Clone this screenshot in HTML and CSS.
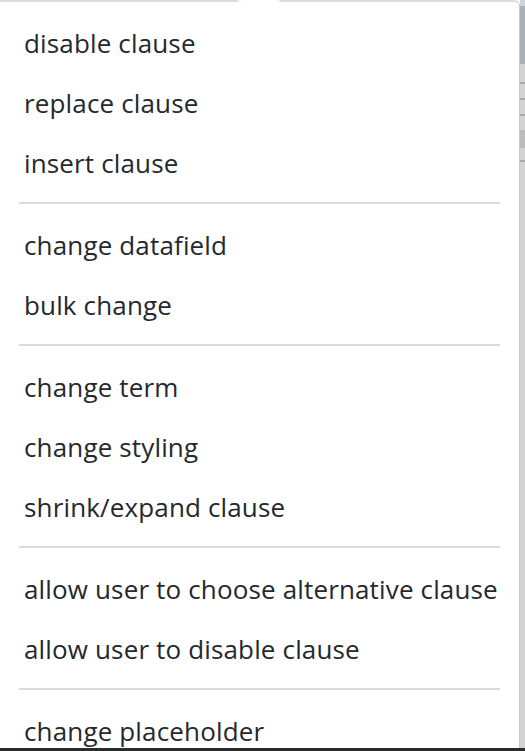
FILE: index.html
```html
<!DOCTYPE html>
<html lang="en">
<head>
<meta charset="utf-8">
<title>Clause menu</title>
<link rel="stylesheet" href="styles.css">
</head>
<body>
<div class="screen">
  <div class="stage">
    <div class="menu">
      <span class="notch"></span>
      <div class="item">disable clause</div>
      <div class="item">replace clause</div>
      <div class="item">insert clause</div>
      <div class="divider"></div>
      <div class="item">change datafield</div>
      <div class="item">bulk change</div>
      <div class="divider"></div>
      <div class="item">change term</div>
      <div class="item">change styling</div>
      <div class="item">shrink/expand clause</div>
      <div class="divider"></div>
      <div class="item">allow user to choose alternative clause</div>
      <div class="item">allow user to disable clause</div>
      <div class="divider"></div>
      <div class="item">change placeholder</div>
    </div>
    <div class="backdrop">
      <span class="seg seg-head"></span>
      <span class="seg seg-tick"></span>
      <span class="seg seg-tick"></span>
      <span class="seg seg-tick"></span>
      <span class="seg seg-long"></span>
      <span class="seg seg-tick"></span>
    </div>
  </div>
  <div class="taskbar"></div>
</div>
</body>
</html>
```
FILE: styles.css
```css
html, body {
  margin: 0;
  padding: 0;
  background: #ffffff;
}

.screen {
  width: 525px;
  height: 751px;
  display: flex;
  flex-direction: column;
  overflow: hidden;
}

.stage {
  height: 748px;
  display: flex;
  overflow: hidden;
}

.menu {
  position: relative;
  width: 520px;
  box-sizing: border-box;
  background: #ffffff;
  border-top: 2px solid #dcdcdc;
  border-right: 1px solid #c8c8c8;
  border-top-right-radius: 6px;
  padding-top: 11px;
  font-family: "Open Sans", "Noto Sans", sans-serif;
  font-size: 26px;
  letter-spacing: 0.15px;
  color: #24292e;
}

.notch {
  position: absolute;
  top: -2px;
  left: 238px;
  width: 42px;
  height: 2px;
  background: linear-gradient(to right, #eeeeee, #ffffff 4px, #ffffff 38px, #eeeeee);
}

.item {
  height: 60px;
  display: flex;
  align-items: center;
  padding-left: 24px;
  white-space: nowrap;
}

.divider {
  height: 2px;
  margin: 9px 19px 11px 19px;
  background: #dadada;
}

.backdrop {
  flex: 1;
  display: flex;
  flex-direction: column;
  background: #d3d3d3;
  padding-top: 6px;
}

.seg {
  display: block;
  width: 100%;
}

.seg-head {
  height: 58px;
  background: #a9b0b8;
  margin-bottom: 18px;
}

.seg-tick {
  height: 2px;
  background: #a9a9a9;
  margin-bottom: 14px;
}

.seg-long {
  height: 18px;
  background: #bcbcbc;
  margin-bottom: 12px;
}

.taskbar {
  height: 3px;
  background: #2b2b2b;
}
```
